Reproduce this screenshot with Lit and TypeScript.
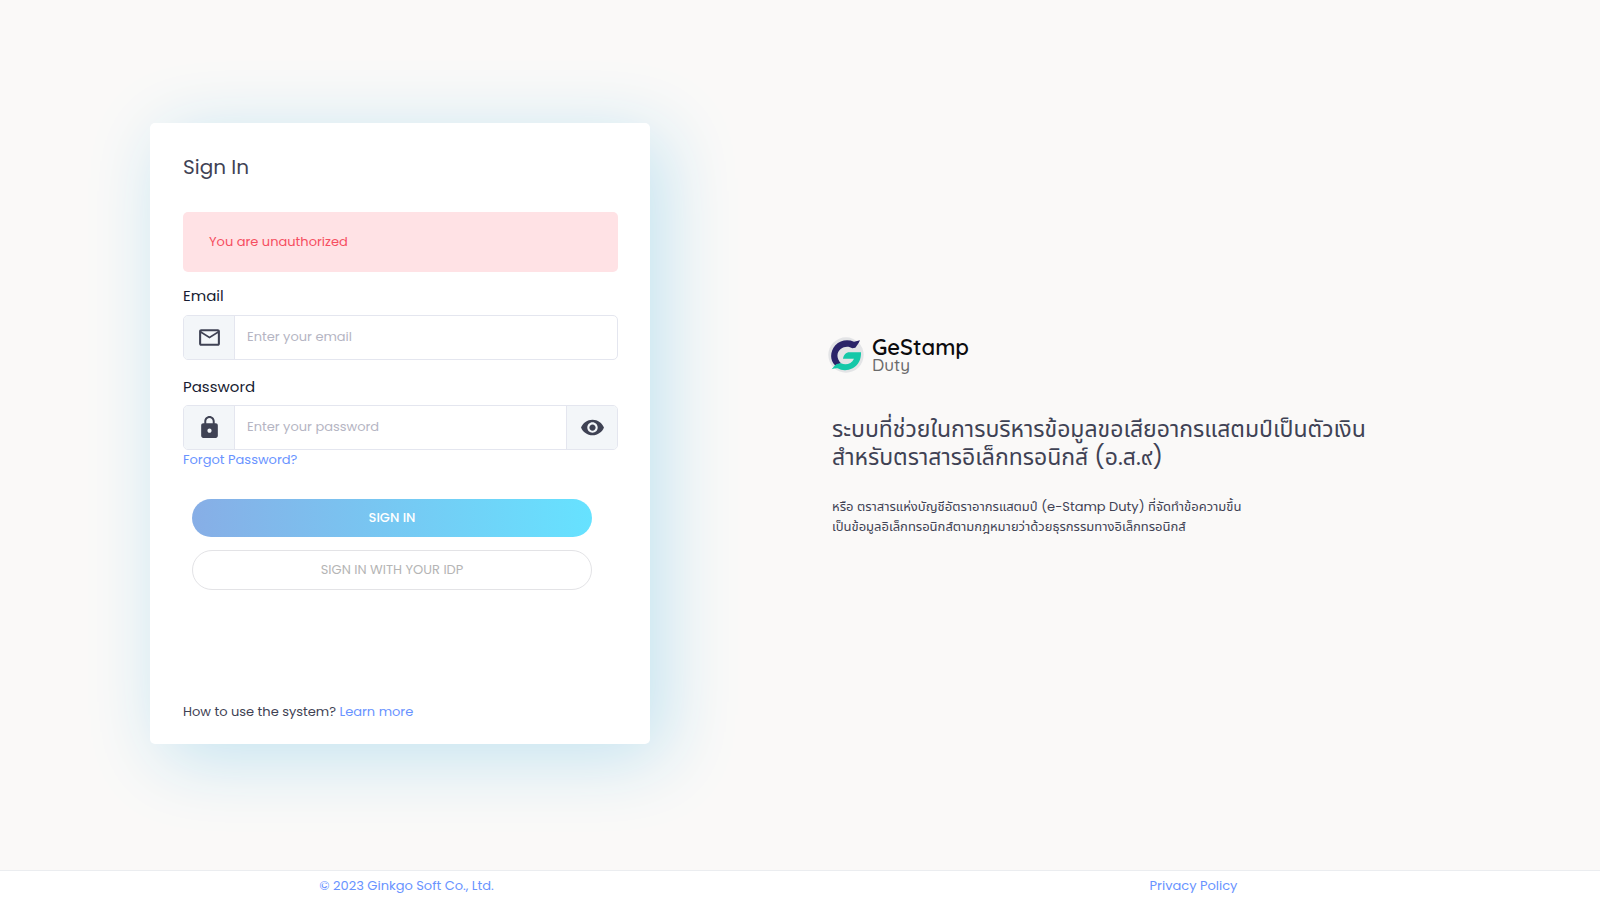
import { LitElement, html, css } from "lit";
import { customElement, state } from "lit/decorators.js";

@customElement("brand-logo")
class BrandLogo extends LitElement {
  static styles = css`
    :host {
      display: flex;
      align-items: center;
      gap: 7px;
      margin-left: -5px;
      color: #0c0c0e;
      font-family: Quicksand, Comfortaa, Lato, sans-serif;
    }
    .mark {
      width: 38px;
      height: 38px;
      flex: none;
    }
    .name {
      font-size: 22px;
      line-height: 20px;
      font-weight: 600;
    }
    .product {
      font-size: 17px;
      line-height: 16px;
      font-weight: 500;
      color: #6a6a6a;
    }
  `;

  render() {
    return html`
      <svg class="mark" viewBox="22 34 114 114" aria-hidden="true">
        <circle cx="79" cy="91" r="53" fill="#e3e4e6" />
        <path
          d="M121 47 L103 51 C84 43 62 46 47 62 C30 82 31 107 46 122 L64 116 C50 102 50 83 63 73 C75 64 89 65 98 71 L107 69 C112 63 117 56 121 47Z"
          fill="#2b2469"
        />
        <path
          d="M36 134 L46 122 C50 118 57 116 64 116 C79 123 96 117 103 102 L70 102 C72 91 79 83 89 83 L124 83 C125 104 116 123 99 131 C83 139 66 138 54 131 C48 130 42 132 36 134Z"
          fill="#14c8a8"
        />
      </svg>
      <div>
        <div class="name">GeStamp</div>
        <div class="product">Duty</div>
      </div>
    `;
  }
}

@customElement("app-root")
class AppRoot extends LitElement {
  @state() private passwordVisible = false;

  static styles = css`
    :host {
      display: flex;
      flex-direction: column;
      min-height: 100vh;
      background: #faf9f8;
      color: #3f4254;
      font-family: Poppins, Inter, "Noto Sans Thai", "Noto Sans", sans-serif;
      font-size: 13px;
      line-height: 20px;
    }
    *,
    *::before,
    *::after {
      box-sizing: border-box;
    }
    a {
      color: #6993ff;
      text-decoration: none;
    }
    h1,
    h2,
    p {
      margin: 0;
      font-weight: 400;
    }
    .main {
      flex: 1;
      display: grid;
      grid-template-columns: 1fr 1fr;
      align-items: center;
      padding-bottom: 4px;
    }
    .card {
      width: 100%;
      max-width: 500px;
      justify-self: center;
      display: flex;
      flex-direction: column;
      padding: 32px 32px 22px 33px;
      background: #fff;
      border-radius: 5px;
      box-shadow: 13px 13px 75px #c0e2f0;
    }
    .title {
      font-size: 20px;
      line-height: 24px;
      margin-bottom: 33px;
    }
    .alert {
      padding: 20px 26px;
      border-radius: 5px;
      background: #ffe2e5;
      color: #f64e60;
    }
    .label {
      margin: 13px 0 8px;
      font-size: 15px;
      line-height: 22px;
      color: #181c32;
    }
    .label.second {
      margin: 16px 0 7px;
    }
    .group {
      display: flex;
      height: 45px;
      border: 1px solid #e4e6ef;
      border-radius: 5px;
      overflow: hidden;
      background: #fff;
    }
    .addon {
      flex: none;
      width: 51px;
      display: grid;
      place-items: center;
      padding: 0;
      border: 0;
      background: #f3f6f9;
      color: #3f4254;
    }
    .addon.start {
      border-right: 1px solid #e4e6ef;
    }
    .addon.end {
      border-left: 1px solid #e4e6ef;
      cursor: pointer;
    }
    .icon {
      width: 25px;
      height: 25px;
      fill: currentColor;
    }
    .input {
      flex: 1;
      min-width: 0;
      padding: 0 12px;
      border: 0;
      outline: 0;
      background: transparent;
      color: #3f4254;
      font: inherit;
    }
    .input::placeholder {
      color: #b5b5c3;
      opacity: 1;
    }
    .actions {
      display: flex;
      flex-direction: column;
      gap: 13px;
      margin: 29px 26px 0 9px;
    }
    .button {
      padding: 9px 16px;
      border: 0;
      border-radius: 20px;
      font: inherit;
      cursor: pointer;
    }
    .primary {
      color: #fff;
      font-weight: 500;
      background: linear-gradient(90deg, #87aee6, #66e2ff);
    }
    .outline {
      color: #b5b5b5;
      background: #fff;
      border: 1px solid #e3e3e6;
    }
    .help {
      margin-top: 112px;
    }
    .about {
      padding: 6px 32px 0;
    }
    .headline {
      margin-top: 41px;
      font-size: 23px;
      line-height: 28px;
    }
    .text {
      margin-top: 26px;
    }
    .footer {
      display: grid;
      grid-template-columns: 1fr 1fr;
      padding: 5px 13px 4px;
      border-top: 1px solid #ebedf0;
      background: #fff;
      text-align: center;
    }
  `;

  private togglePassword() {
    this.passwordVisible = !this.passwordVisible;
  }

  render() {
    return html`
      <main class="main">
        <form class="card" @submit=${(e: Event) => e.preventDefault()}>
          <h1 class="title">Sign In</h1>
          <div class="alert" role="alert">You are unauthorized</div>

          <label class="label" for="email">Email</label>
          <div class="group">
            <span class="addon start">
              <svg class="icon" viewBox="0 0 24 24" aria-hidden="true">
                <path
                  d="M20 4H4c-1.100 0-2 .9-2 2v12c0 1.100.9 2 2 2h16c1.100 0 2-.9 2-2V6c0-1.100-.9-2-2-2zm0 14H4V8l8 5 8-5v10zm-8-7L4 6h16l-8 5z"
                />
              </svg>
            </span>
            <input class="input" id="email" type="email" placeholder="Enter your email" />
          </div>

          <label class="label second" for="password">Password</label>
          <div class="group">
            <span class="addon start">
              <svg class="icon" viewBox="0 0 24 24" aria-hidden="true">
                <path
                  d="M18 8h-1V6c0-2.760-2.240-5-5-5S7 3.240 7 6v2H6c-1.100 0-2 .9-2 2v10c0 1.100.9 2 2 2h12c1.100 0 2-.9 2-2V10c0-1.100-.9-2-2-2zm-6 9c-1.100 0-2-.9-2-2s.9-2 2-2 2 .9 2 2-.9 2-2 2zm3.100-9H8.900V6c0-1.710 1.390-3.100 3.100-3.100s3.100 1.390 3.100 3.100v2z"
                />
              </svg>
            </span>
            <input
              class="input"
              id="password"
              type=${this.passwordVisible ? "text" : "password"}
              placeholder="Enter your password"
            />
            <button
              class="addon end"
              type="button"
              aria-label="Show password"
              @click=${this.togglePassword}
            >
              <svg class="icon" viewBox="0 0 24 24" aria-hidden="true">
                <path
                  d="M12 4.500C7 4.500 2.730 7.610 1 12c1.730 4.390 6 7.500 11 7.500s9.270-3.110 11-7.500c-1.730-4.390-6-7.500-11-7.500zM12 17c-2.760 0-5-2.240-5-5s2.240-5 5-5 5 2.240 5 5-2.240 5-5 5zm0-8c-1.660 0-3 1.340-3 3s1.340 3 3 3 3-1.340 3-3-1.340-3-3-3z"
                />
              </svg>
            </button>
          </div>
          <div><a href="#forgot">Forgot Password?</a></div>

          <div class="actions">
            <button class="button primary" type="submit">SIGN IN</button>
            <button class="button outline" type="button">SIGN IN WITH YOUR IDP</button>
          </div>

          <p class="help">How to use the system? <a href="#learn">Learn more</a></p>
        </form>

        <section class="about">
          <brand-logo></brand-logo>
          <h2 class="headline">
            ระบบที่ช่วยในการบริหารข้อมูลขอเสียอากรแสตมป์เป็นตัวเงิน<br />
            สำหรับตราสารอิเล็กทรอนิกส์ (อ.ส.๙)
          </h2>
          <p class="text">
            หรือ ตราสารแห่งบัญชีอัตราอากรแสตมป์ (e-Stamp Duty) ที่จัดทำข้อความขึ้น<br />
            เป็นข้อมูลอิเล็กทรอนิกส์ตามกฎหมายว่าด้วยธุรกรรมทางอิเล็กทรอนิกส์
          </p>
        </section>
      </main>
      <footer class="footer">
        <div><a href="#company">© 2023 Ginkgo Soft Co., Ltd.</a></div>
        <div><a href="#privacy">Privacy Policy</a></div>
      </footer>
    `;
  }
}
